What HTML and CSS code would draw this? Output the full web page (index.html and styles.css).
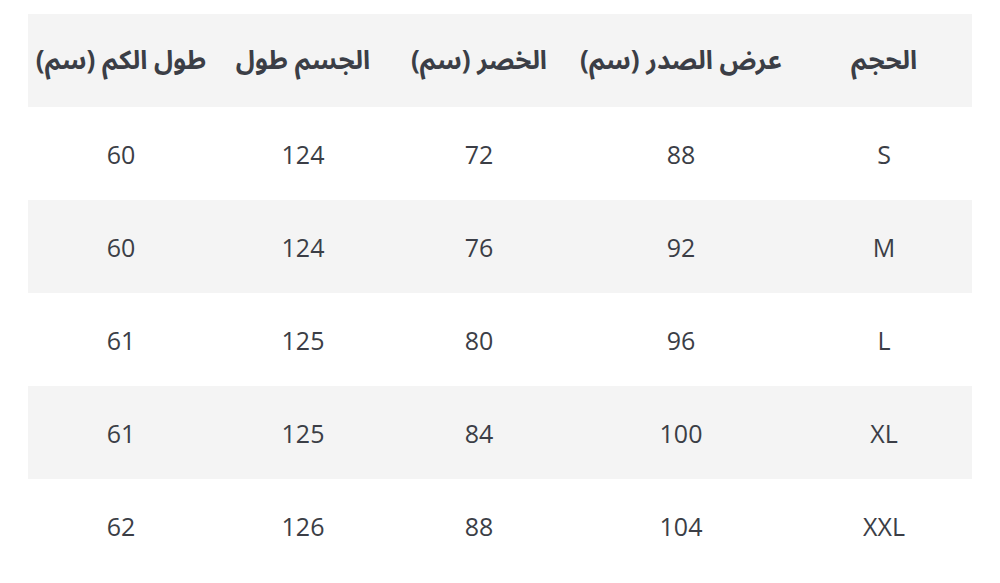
FILE: index.html
```html
<!DOCTYPE html>
<html lang="ar" dir="rtl">
<head>
<meta charset="utf-8">
<link rel="stylesheet" href="styles.css">
</head>
<body>
<table class="size-table">
  <colgroup>
    <col class="c1"><col class="c2"><col class="c3"><col class="c4"><col class="c5">
  </colgroup>
  <thead>
    <tr>
      <th>الحجم</th>
      <th>عرض الصدر (سم)</th>
      <th>الخصر (سم)</th>
      <th>الجسم طول</th>
      <th>طول الكم (سم)</th>
    </tr>
  </thead>
  <tbody>
    <tr><td>S</td><td>88</td><td>72</td><td>124</td><td>60</td></tr>
    <tr class="alt"><td>M</td><td>92</td><td>76</td><td>124</td><td>60</td></tr>
    <tr><td>L</td><td>96</td><td>80</td><td>125</td><td>61</td></tr>
    <tr class="alt"><td>XL</td><td>100</td><td>84</td><td>125</td><td>61</td></tr>
    <tr><td>XXL</td><td>104</td><td>88</td><td>126</td><td>62</td></tr>
  </tbody>
</table>
</body>
</html>
```
FILE: styles.css
```css
html, body {
  margin: 0;
  padding: 0;
  background: #ffffff;
}
body {
  padding: 14px 28px 0 28px;
}
.size-table {
  width: 944px;
  border-collapse: collapse;
  table-layout: fixed;
  direction: rtl;
  color: #3b3e46;
}
.c1 { width: 176px; }
.c2 { width: 230px; }
.c3 { width: 174px; }
.c4 { width: 178px; }
.c5 { width: 186px; }
.size-table th {
  height: 93px;
  padding: 0;
  background: #f4f4f4;
  font-family: "Noto Sans Arabic", "DejaVu Sans", sans-serif;
  font-weight: 700;
  font-size: 26px;
  text-align: center;
  vertical-align: middle;
}
.size-table td {
  height: 93px;
  padding: 0;
  font-family: "Open Sans", "Noto Sans", sans-serif;
  font-size: 25px;
  text-align: center;
  vertical-align: middle;
}
.size-table tr.alt td {
  background: #f4f4f4;
}
```
